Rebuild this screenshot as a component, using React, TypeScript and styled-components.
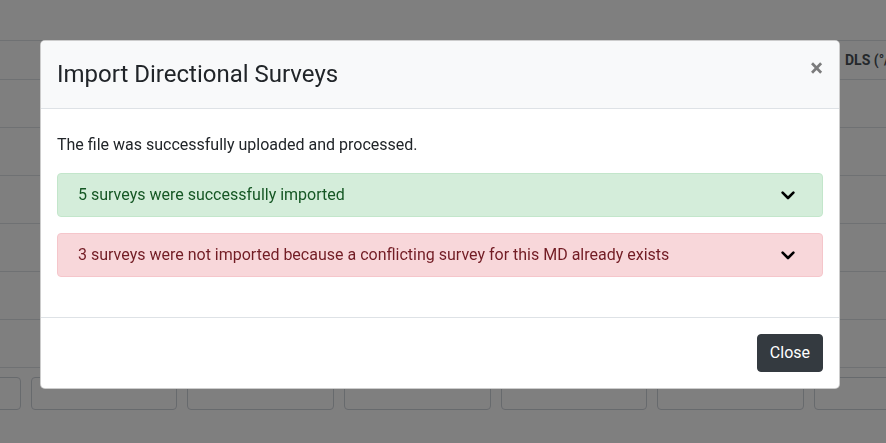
import React from 'react'
import styled, { createGlobalStyle } from 'styled-components'

type Result = {
  tone: 'success' | 'danger'
  text: string
}

const results: Result[] = [
  { tone: 'success', text: '5 surveys were successfully imported' },
  {
    tone: 'danger',
    text: '3 surveys were not imported because a conflicting survey for this MD already exists',
  },
]

// only the last heading peeks out from behind the dialog
const columns = ['', '', '', '', '', '', '', 'DLS (°/100ft)']
const rows = [1, 2, 3, 4, 5, 6]
const inputs = [1, 2, 3, 4, 5, 6, 7]

const tones = {
  success: { bg: '#d4edda', border: '#c3e6cb', color: '#155724' },
  danger: { bg: '#f8d7da', border: '#f5c6cb', color: '#721c24' },
}

const GlobalStyle = createGlobalStyle`
  html, body {
    margin: 0;
    background: #fff;
    font-family: Roboto, 'Liberation Sans', sans-serif;
    color: #212529;
    overflow: hidden;
  }
  * {
    box-sizing: border-box;
  }
`

const Chevron = () => (
  <svg width='14' height='9' viewBox='0 0 14 9' fill='none'>
    <polyline
      points='1.6,1.6 7,7 12.4,1.6'
      stroke='#000'
      strokeWidth='2.6'
      strokeLinecap='round'
      strokeLinejoin='round'
    />
  </svg>
)

const App = () => {
  return (
    <>
      <GlobalStyle />
      <Page>
        <SurveyTable>
          <thead>
            <tr>
              {columns.map((c, i) => (
                <HeadCell key={i}>{c}</HeadCell>
              ))}
            </tr>
          </thead>
          <tbody>
            {rows.map((r) => (
              <tr key={r}>
                {columns.map((_, i) => (
                  <Cell key={i} />
                ))}
              </tr>
            ))}
          </tbody>
        </SurveyTable>
        <InputRow>
          {inputs.map((n) => (
            <Input key={n} />
          ))}
        </InputRow>
      </Page>

      <Backdrop>
        <Modal>
          <ModalHeader>
            <ModalTitle>Import Directional Surveys</ModalTitle>
            <CloseX type='button' aria-label='Close'>
              ×
            </CloseX>
          </ModalHeader>
          <ModalBody>
            <Lead>The file was successfully uploaded and processed.</Lead>
            {results.map((r) => (
              <Alert key={r.tone} $tone={r.tone}>
                <span>{r.text}</span>
                <Chevron />
              </Alert>
            ))}
          </ModalBody>
          <ModalFooter>
            <DarkButton type='button'>Close</DarkButton>
          </ModalFooter>
        </Modal>
      </Backdrop>
    </>
  )
}

const Page = styled.div`
  padding-top: 40px;
  width: 886px;
  height: 443px;
  overflow: hidden;
`

const SurveyTable = styled.table`
  width: 1032px;
  border-collapse: collapse;
  table-layout: fixed;
  font-size: 14px;
`

const HeadCell = styled.th`
  width: 119px;
  height: 39px;
  padding: 0 12px;
  text-align: left;
  font-weight: 700;
  font-size: 14px;
  color: #495057;
  white-space: nowrap;
  border-top: 1px solid #dee2e6;
  border-bottom: 1px solid #dee2e6;
  &:last-child {
    width: 200px;
  }
`

const Cell = styled.td`
  height: 48px;
  border-bottom: 1px solid #dee2e6;
`

const InputRow = styled.div`
  display: flex;
  gap: 10px;
  margin-top: 9px;
  margin-left: -126px;
`

const Input = styled.div`
  flex: 0 0 146.7px;
  height: 33px;
  border: 1px solid #ced4da;
  border-radius: 4px;
  background: #fff;
`

const Backdrop = styled.div`
  position: fixed;
  inset: 0;
  background: rgba(0, 0, 0, 0.5);
  padding: 40px 0 0 40px;
`

const Modal = styled.div`
  width: 800px;
  background: #fff;
  border: 1px solid rgba(0, 0, 0, 0.2);
  border-radius: 5px;
  overflow: hidden;
`

const ModalHeader = styled.div`
  display: flex;
  align-items: flex-start;
  justify-content: space-between;
  padding: 15px 16px 16px;
  background: #f8f9fa;
  border-bottom: 1px solid #dee2e6;
`

const ModalTitle = styled.h4`
  margin: 0;
  font-size: 24px;
  font-weight: 400;
  line-height: 36px;
  color: #212529;
`

const CloseX = styled.button`
  border: 0;
  background: transparent;
  padding: 0;
  margin: 0 0 0 auto;
  font-family: Roboto, 'Liberation Sans', sans-serif;
  font-size: 24px;
  font-weight: 700;
  line-height: 24px;
  color: #000;
  opacity: 0.5;
  text-shadow: 0 1px 0 #fff;
`

const ModalBody = styled.div`
  padding: 24px 16px;
`

const Lead = styled.p`
  margin: 0 0 16px;
  font-size: 16px;
  line-height: 24px;
`

const Alert = styled.div<{ $tone: Result['tone'] }>`
  display: flex;
  align-items: center;
  justify-content: space-between;
  padding: 9px 27px 9px 20px;
  margin-bottom: 16px;
  font-size: 16px;
  line-height: 24px;
  border-radius: 4px;
  background: ${(p) => tones[p.$tone].bg};
  border: 1px solid ${(p) => tones[p.$tone].border};
  color: ${(p) => tones[p.$tone].color};
`

const ModalFooter = styled.div`
  display: flex;
  justify-content: flex-end;
  padding: 16px;
  border-top: 1px solid #dee2e6;
`

const DarkButton = styled.button`
  padding: 6px 12px;
  font-family: Roboto, 'Liberation Sans', sans-serif;
  font-size: 16px;
  line-height: 24px;
  color: #fff;
  background: #343a40;
  border: 1px solid #343a40;
  border-radius: 4px;
`

export default App
